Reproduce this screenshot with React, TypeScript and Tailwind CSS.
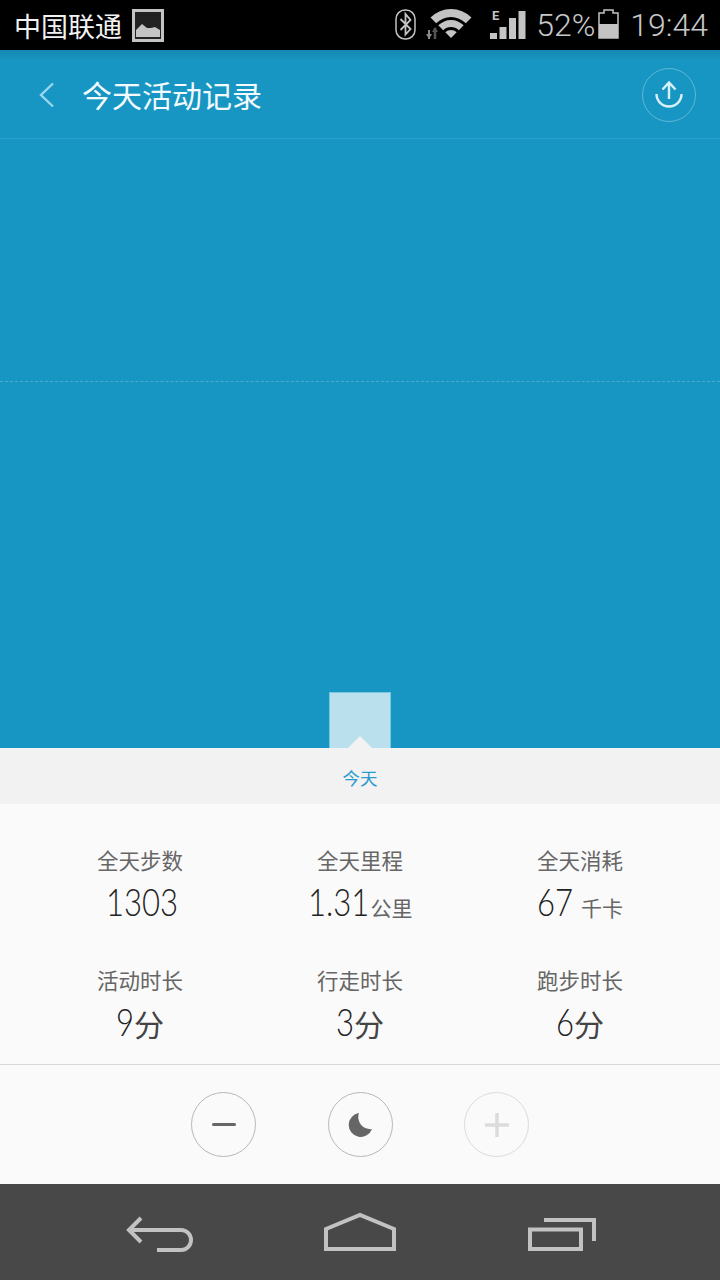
import type { ReactNode } from 'react';

const cjk = { fontFamily: '"Noto Sans CJK SC", Roboto, sans-serif' };
const num = { fontFamily: 'Lato, "Noto Sans CJK SC", sans-serif' };

function StatusBar() {
  return (
    <div className="h-[50px] bg-black flex items-center pl-[14px] pr-[12px]" style={{ fontFamily: 'Roboto, "Noto Sans CJK SC", sans-serif' }}>
      <span className="text-[27px] leading-none text-[#f2f2f2]" style={cjk}>中国联通</span>
      <svg width="32" height="33" viewBox="0 0 32 33" className="ml-[10px]">
        <rect x="1.5" y="1.5" width="29" height="30" fill="#222" stroke="#c4c4c4" strokeWidth="3" />
        <path d="M4 28 V21 L10 15 L15 19 L19 19 L23 18 L28 21 V28 Z" fill="#c4c4c4" />
      </svg>
      <div className="ml-auto flex items-center">
        <svg width="21" height="32" viewBox="0 0 21 32" className="mr-[10px]">
          <rect x="1" y="1" width="19" height="29" rx="9" fill="none" stroke="#c4c4c4" strokeWidth="1.500" />
          <path d="M5.500 10 L15.500 20 L10.500 25.500 V5 L15.500 11 L5.500 21" fill="none" stroke="#c4c4c4" strokeWidth="1.800" />
        </svg>
        <svg width="46" height="32" viewBox="0 0 46 32" className="mr-[18px]">
          <path d="M4.500 8.500 A29 29 0 0 1 45.500 8.500 L39.800 14.200 A21 21 0 0 0 10.200 14.200 Z" fill="#c4c4c4" />
          <path d="M12.300 16.300 A18 18 0 0 1 37.700 16.300 L32.800 21.200 A11 11 0 0 0 17.200 21.200 Z" fill="#c4c4c4" />
          <path d="M19.300 23.300 A8 8 0 0 1 30.700 23.300 L25 29 Z" fill="#c4c4c4" />
          <path d="M3 21 V30" stroke="#8a8a8a" strokeWidth="2" />
          <path d="M0 25 H6 L3 30 Z" fill="#8a8a8a" />
          <path d="M9 19 V30" stroke="#555" strokeWidth="2.500" />
          <path d="M9 18 L12 23 H6 Z" fill="#555" />
        </svg>
        <svg width="36" height="32" viewBox="0 0 36 32" className="mr-[10px]">
          <text x="2" y="11" fontSize="13" fontWeight="700" fill="#c4c4c4" fontFamily="Roboto">E</text>
          <rect x="0" y="24" width="7" height="6" fill="#c4c4c4" />
          <rect x="9.500" y="18" width="7" height="12" fill="#c4c4c4" />
          <rect x="19" y="9" width="7" height="21" fill="#c4c4c4" />
          <rect x="28.500" y="2" width="7" height="28" fill="#c4c4c4" />
        </svg>
        <span className="text-[32px] leading-none font-light text-[#c8c8c8]">52%</span>
        <svg width="21" height="32" viewBox="0 0 21 32" className="ml-[3px]">
          <path d="M6 1 H15 V4 H20 V29 H1 V4 H6 Z" fill="none" stroke="#c4c4c4" strokeWidth="1.500" />
          <rect x="1" y="15" width="19" height="14" fill="#c4c4c4" />
        </svg>
        <span className="ml-[11px] text-[32px] leading-none font-light text-[#c8c8c8]">19:44</span>
      </div>
    </div>
  );
}

function Header() {
  return (
    <div className="h-[89px] flex items-center pl-[39px] pr-[24px] pt-[1px] border-b border-[#2ba0ca] bg-gradient-to-b from-[#1688b2] from-0% to-[#1896c3] to-[12%]">
      <svg width="16" height="26" viewBox="0 0 16 26" fill="none">
        <path d="M14 1.500 L2 13 L14 24.500" stroke="#9bd6ec" strokeWidth="2.400" />
      </svg>
      <span className="ml-[27px] pb-[2px] text-[30px] leading-none text-[#f2fafd]" style={cjk}>今天活动记录</span>
      <div className="ml-auto w-[54px] h-[54px] rounded-full border border-[#5db8d8] flex items-center justify-center">
        <svg width="30" height="30" viewBox="0 0 30 30" fill="none" stroke="#d8f1f9" strokeWidth="2.400">
          <path d="M15 19 V3 M8.500 9.500 L15 2.500 L21.500 9.500" />
          <path d="M2.500 14 A12.500 12.500 0 0 0 27.500 14" />
        </svg>
      </div>
    </div>
  );
}

function Chart() {
  return (
    <div className="h-[609px] bg-[#1896c3] flex flex-col">
      <div className="h-[243px] border-b border-dashed border-[#4aaccf]" />
      <div className="flex-1 flex items-end justify-center">
        <div className="w-[62px] h-[56px] bg-[#b9e0ec] border-t border-x border-[#7cc6df]" />
      </div>
    </div>
  );
}

type StatProps = { label: string; value: string; width: number; unit?: string; suffix?: string };

function Stat({ label, value, width, unit, suffix }: StatProps) {
  return (
    <div className="flex flex-col items-center">
      <span className="text-[21.5px] leading-[28px] text-[#666]" style={cjk}>{label}</span>
      <div className="mt-[8px] h-[40px] flex items-baseline justify-center text-[#222]">
        {/* digits in the picture are narrower than any installed face */}
        <span
          className="inline-block whitespace-nowrap origin-left scale-x-[.84] text-[37px] leading-[40px] font-light"
          style={{ ...num, width }}
        >
          {value}
        </span>
        {suffix && <span className="text-[30px] leading-[40px] text-[#444]" style={cjk}>{suffix}</span>}
        {unit && <span className="ml-[8px] text-[21px] text-[#666]" style={cjk}>{unit}</span>}
      </div>
    </div>
  );
}

function RoundButton({ children, faint }: { children: ReactNode; faint?: boolean }) {
  return (
    <div className={`w-[65px] h-[65px] rounded-full border-[1.5px] flex items-center justify-center ${faint ? 'border-[#dcdcdc]' : 'border-[#b8b8b8]'}`}>
      {children}
    </div>
  );
}

export default function App() {
  return (
    <div className="w-[720px] h-[1280px] flex flex-col overflow-hidden bg-[#fafafa]">
      <StatusBar />
      <Header />
      <Chart />

      {/* today tab */}
      <div className="relative h-[56px] bg-[#f2f2f2] flex items-center justify-center pt-[4px]">
        <div className="absolute left-[348px] top-[-12px] w-0 h-0 border-x-[12px] border-x-transparent border-b-[12px] border-b-[#f2f2f2]" />
        <span className="text-[17.5px] text-[#2a9ad0]" style={cjk}>今天</span>
      </div>

      {/* stats */}
      <div className="h-[261px] pt-[42px] border-b border-[#d8d8d8]">
        <div className="grid grid-cols-3 px-[30px] gap-y-[44px]">
          <Stat label="全天步数" value="1303" width={68} />
          <Stat label="全天里程" value="1.31" width={55} unit="公里" />
          <Stat label="全天消耗" value="67" width={36} unit="千卡" />
          <Stat label="活动时长" value="9" width={18} suffix="分" />
          <Stat label="行走时长" value="3" width={18} suffix="分" />
          <Stat label="跑步时长" value="6" width={18} suffix="分" />
        </div>
      </div>

      {/* controls */}
      <div className="h-[119px] flex items-center justify-center gap-[71.5px]">
        <RoundButton>
          <div className="w-[24px] h-[3.500px] rounded-full bg-[#666]" />
        </RoundButton>
        <RoundButton>
          <svg width="26" height="26" viewBox="0 0 26 26">
            <path d="M12 1 A12 12 0 1 0 25 17 A12 12 0 0 1 12 1 Z" fill="#666" />
          </svg>
        </RoundButton>
        <RoundButton faint>
          <svg width="24" height="24" viewBox="0 0 24 24">
            <path d="M12 0 V24 M0 12 H24" stroke="#dcdcdc" strokeWidth="3.500" />
          </svg>
        </RoundButton>
      </div>

      {/* nav bar */}
      <div className="h-[96px] bg-[#484848] flex items-center justify-center">
        <svg width="520" height="96" viewBox="0 0 520 96" fill="none" stroke="#c2c2c2" strokeWidth="4">
          <path d="M41 34 L29 46 L41 58 M29 46 H81 A10 10 0 0 1 81 66 H57" />
          <path d="M226 65 V45 L260 31 L294 45 V65 Z" />
          <path d="M430 45.500 H481 V65 H430 Z M444 36 H494 V57" />
        </svg>
      </div>
    </div>
  );
}
